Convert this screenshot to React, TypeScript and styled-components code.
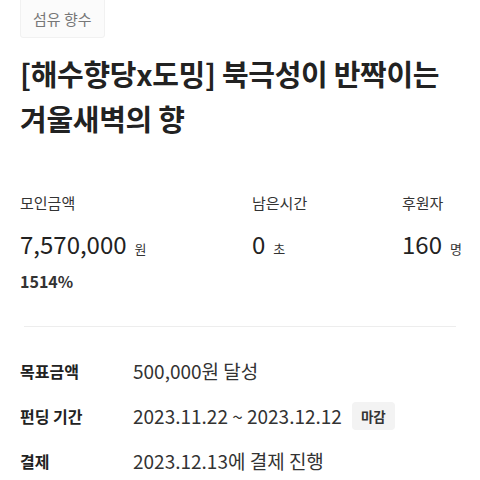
import React from "react";
import styled, { createGlobalStyle } from "styled-components";

const GlobalStyle = createGlobalStyle`
  html, body {
    margin: 0;
    padding: 0;
    background: #ffffff;
    overflow: hidden;
  }
  body {
    font-family: "Noto Sans CJK KR", "Noto Sans", sans-serif;
    color: #222;
  }
`;

type StatTypes = {
  label: string;
  value: string;
  unit: string;
  sub?: string;
};

type InfoTypes = {
  label: string;
  value: string;
  badge?: string;
};

const stats: StatTypes[] = [
  { label: "모인금액", value: "7,570,000", unit: "원", sub: "1514%" },
  { label: "남은시간", value: "0", unit: "초" },
  { label: "후원자", value: "160", unit: "명" },
];

const infos: InfoTypes[] = [
  { label: "목표금액", value: "500,000원 달성" },
  { label: "펀딩 기간", value: "2023.11.22 ~ 2023.12.12", badge: "마감" },
  { label: "결제", value: "2023.12.13에 결제 진행" },
];

const App = () => {
  return (
    <>
      <GlobalStyle />
      <Container>
        <Category>섬유 향수</Category>
        <Title>[해수향당x도밍] 북극성이 반짝이는 겨울새벽의 향</Title>
        <StatRow>
          {stats.map((s) => (
            <Stat key={s.label}>
              <StatLabel>{s.label}</StatLabel>
              <StatValue>
                {s.value}
                <Unit>{s.unit}</Unit>
              </StatValue>
              {s.sub && <Percent>{s.sub}</Percent>}
            </Stat>
          ))}
        </StatRow>
        <Divider />
        <InfoList>
          {infos.map((i) => (
            <InfoRow key={i.label}>
              <InfoLabel>{i.label}</InfoLabel>
              <InfoValue>
                {i.value}
                {i.badge && <Badge>{i.badge}</Badge>}
              </InfoValue>
            </InfoRow>
          ))}
        </InfoList>
      </Container>
    </>
  );
};

export default App;

const Container = styled.div`
  width: 480px;
  padding: 0 20px;
  box-sizing: border-box;
  display: flex;
  flex-direction: column;
  align-items: flex-start;
`;
const Category = styled.div`
  margin-top: -8px;
  height: 46px;
  flex-shrink: 0;
  box-sizing: border-box;
  padding: 7px 12px 0;
  display: flex;
  align-items: center;
  background: #fbfbfb;
  border: 1px solid #f1f1f1;
  border-radius: 3px;
  color: #777;
  font-size: 15px;
  line-height: 20px;
`;
const Title = styled.h1`
  margin: 13px 0 0;
  font-size: 29px;
  line-height: 45px;
  font-weight: 700;
  color: #222;
  letter-spacing: -0.3px;
`;
const StatRow = styled.div`
  margin-top: 52px;
  width: 100%;
  display: grid;
  grid-template-columns: 232px 150px 1fr;
`;
const Stat = styled.div`
  display: flex;
  flex-direction: column;
`;
const StatLabel = styled.div`
  font-size: 15px;
  line-height: 20px;
  color: #333;
`;
const StatValue = styled.div`
  margin-top: 16px;
  font-size: 24px;
  line-height: 30px;
  color: #222;
  display: flex;
  align-items: baseline;
`;
const Unit = styled.span`
  font-size: 13px;
  margin-left: 8px;
  color: #333;
`;
const Percent = styled.div`
  margin-top: 7px;
  font-size: 16px;
  line-height: 20px;
  font-weight: 700;
  color: #333;
`;
const Divider = styled.div`
  margin: 35px 4px 0;
  align-self: stretch;
  flex-shrink: 0;
  height: 1px;
  background: #ededed;
`;
const InfoList = styled.div`
  margin-top: 21px;
  width: 100%;
  display: flex;
  flex-direction: column;
`;
const InfoRow = styled.div`
  height: 45px;
  display: grid;
  grid-template-columns: 113px 1fr;
  align-items: center;
`;
const InfoLabel = styled.div`
  font-size: 16px;
  font-weight: 700;
  color: #222;
`;
const InfoValue = styled.div`
  font-size: 19px;
  color: #333;
  display: flex;
  align-items: center;
`;
const Badge = styled.span`
  margin-left: 10px;
  height: 28px;
  padding: 0 9px;
  display: flex;
  align-items: center;
  background: #f3f3f3;
  border-radius: 4px;
  font-size: 13.5px;
  font-weight: 700;
  color: #333;
`;
